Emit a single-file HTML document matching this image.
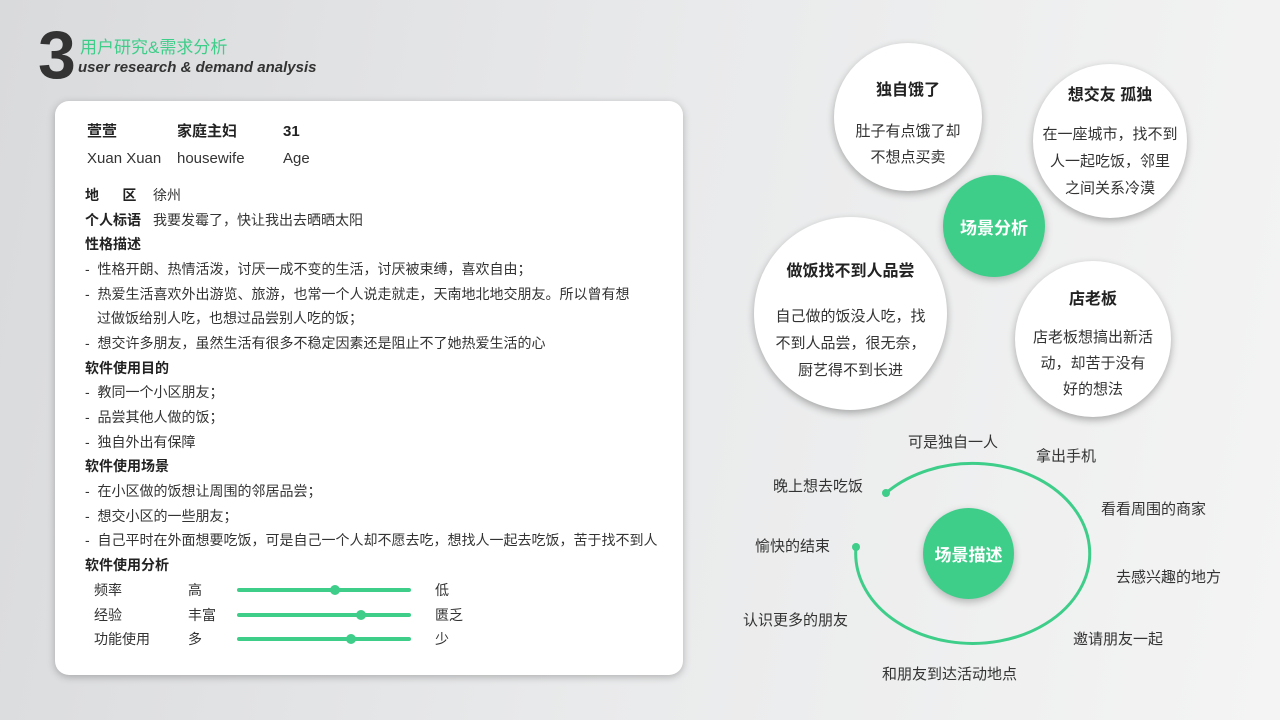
<!DOCTYPE html>
<html><head><meta charset="utf-8"><style>
*{margin:0;padding:0;box-sizing:border-box}
body{width:1280px;height:720px;overflow:hidden;position:relative;font-family:"Liberation Sans","Noto Sans CJK SC",sans-serif;background:linear-gradient(100deg,#d9dadc 0%,#e9eaeb 50%,#f4f4f4 100%);color:#333}
.abs{position:absolute}
.card{left:55px;top:101px;width:628px;height:574px;background:#fff;border-radius:14px;box-shadow:0 2px 8px rgba(0,0,0,.25)}
.t{position:absolute;font-size:14px;white-space:nowrap;color:#333;line-height:20px}
.b{font-weight:bold;color:#222}
.c{position:absolute;border-radius:50%;background:#fff;box-shadow:0 3px 8px rgba(0,0,0,.3);display:flex;flex-direction:column;align-items:center;justify-content:center;text-align:center}
.c h4{font-size:16px;font-weight:bold;color:#222;margin-bottom:16px}
.c p{font-size:15px;line-height:27px;color:#333}
.g{position:absolute;border-radius:50%;background:#3fcd8a;color:#fff;font-weight:bold;font-size:17px;display:flex;align-items:center;justify-content:center;box-shadow:0 3px 8px rgba(0,0,0,.25)}
.lbl{position:absolute;font-size:15px;color:#333;white-space:nowrap}
.bar{position:absolute;left:238px;width:174px;height:4px;border-radius:2px;background:#3fcd8a}
.dot{position:absolute;width:10px;height:10px;border-radius:50%;background:#3fcd8a;top:-3px}
</style></head><body>
<div class="abs" style="left:38px;top:24px;font-size:68px;font-weight:bold;color:#333;line-height:62px">3</div>
<div class="abs" style="left:80px;top:38px;font-size:17px;color:#3fcd8a;line-height:20px">用户研究&amp;需求分析</div>
<div class="abs" style="left:78px;top:58px;font-size:15px;font-weight:bold;font-style:italic;color:#333;line-height:20px">user research &amp; demand analysis</div>

<div class="abs card">
<div class="t b" style="left:32px;top:21px;font-size:15px">萱萱</div>
<div class="t b" style="left:122px;top:21px;font-size:15px">家庭主妇</div>
<div class="t b" style="left:228px;top:21px;font-size:15px">31</div>
<div class="t" style="left:32px;top:48px;font-size:15px">Xuan Xuan</div>
<div class="t" style="left:122px;top:48px;font-size:15px">housewife</div>
<div class="t" style="left:228px;top:48px;font-size:15px">Age</div>
<div class="t b" style="left:30px;top:84px">地&nbsp;&nbsp;&nbsp;&nbsp;&nbsp;&nbsp;区</div><div class="t" style="left:98px;top:84px">徐州</div>
<div class="t b" style="left:30px;top:109px">个人标语</div><div class="t" style="left:98px;top:109px">我要发霉了，快让我出去晒晒太阳</div>
<div class="t b" style="left:30px;top:133px">性格描述</div>
<div class="t" style="left:30px;top:158px">-&nbsp; 性格开朗、热情活泼，讨厌一成不变的生活，讨厌被束缚，喜欢自由；</div>
<div class="t" style="left:30px;top:183px">-&nbsp; 热爱生活喜欢外出游览、旅游，也常一个人说走就走，天南地北地交朋友。所以曾有想</div>
<div class="t" style="left:42px;top:207px">过做饭给别人吃，也想过品尝别人吃的饭；</div>
<div class="t" style="left:30px;top:232px">-&nbsp; 想交许多朋友，虽然生活有很多不稳定因素还是阻止不了她热爱生活的心</div>
<div class="t b" style="left:30px;top:257px">软件使用目的</div>
<div class="t" style="left:30px;top:281px">-&nbsp; 教同一个小区朋友；</div>
<div class="t" style="left:30px;top:306px">-&nbsp; 品尝其他人做的饭；</div>
<div class="t" style="left:30px;top:331px">-&nbsp; 独自外出有保障</div>
<div class="t b" style="left:30px;top:355px">软件使用场景</div>
<div class="t" style="left:30px;top:380px">-&nbsp; 在小区做的饭想让周围的邻居品尝；</div>
<div class="t" style="left:30px;top:405px">-&nbsp; 想交小区的一些朋友；</div>
<div class="t" style="left:30px;top:429px">-&nbsp; 自己平时在外面想要吃饭，可是自己一个人却不愿去吃，想找人一起去吃饭，苦于找不到人</div>
<div class="t b" style="left:30px;top:454px">软件使用分析</div>
<div class="t" style="left:39px;top:479px">频率</div><div class="t" style="left:133px;top:479px">高</div><div class="t" style="left:380px;top:479px">低</div>
<div class="bar" style="top:487px;left:182px"><div class="dot" style="left:93px"></div></div>
<div class="t" style="left:39px;top:504px">经验</div><div class="t" style="left:133px;top:504px">丰富</div><div class="t" style="left:380px;top:504px">匮乏</div>
<div class="bar" style="top:512px;left:182px"><div class="dot" style="left:119px"></div></div>
<div class="t" style="left:39px;top:528px">功能使用</div><div class="t" style="left:133px;top:528px">多</div><div class="t" style="left:380px;top:528px">少</div>
<div class="bar" style="top:536px;left:182px"><div class="dot" style="left:109px"></div></div>
</div>

<div class="c" style="left:834px;top:43px;width:148px;height:148px;padding-top:12px"><h4 style="margin-bottom:19px">独自饿了</h4><p style="line-height:26px">肚子有点饿了却<br>不想点买卖</p></div>
<div class="c" style="left:1033px;top:64px;width:154px;height:154px"><h4>想交友 孤独</h4><p>在一座城市，找不到<br>人一起吃饭，邻里<br>之间关系冷漠</p></div>
<div class="c" style="left:754px;top:217px;width:193px;height:193px;padding-top:14px"><h4 style="margin-bottom:22px">做饭找不到人品尝</h4><p>自己做的饭没人吃，找<br>不到人品尝，很无奈，<br>厨艺得不到长进</p></div>
<div class="c" style="left:1015px;top:261px;width:156px;height:156px;padding-top:10px"><h4>店老板</h4><p style="line-height:26px">店老板想搞出新活<br>动，却苦于没有<br>好的想法</p></div>
<div class="g" style="left:943px;top:175px;width:102px;height:102px">场景分析</div>

<svg class="abs" style="left:0;top:0" width="1280" height="720">
<path d="M886 493 A117 90 0 1 1 856 547" fill="none" stroke="#3fcd8a" stroke-width="3"/>
<circle cx="886" cy="493" r="4" fill="#3fcd8a"/><circle cx="856" cy="547" r="4" fill="#3fcd8a"/>
</svg>
<div class="g" style="left:923px;top:508px;width:91px;height:91px">场景描述</div>
<div class="lbl" style="left:908px;top:431px">可是独自一人</div>
<div class="lbl" style="left:1036px;top:445px">拿出手机</div>
<div class="lbl" style="left:773px;top:475px">晚上想去吃饭</div>
<div class="lbl" style="left:1101px;top:498px">看看周围的商家</div>
<div class="lbl" style="left:755px;top:535px">愉快的结束</div>
<div class="lbl" style="left:1116px;top:566px">去感兴趣的地方</div>
<div class="lbl" style="left:743px;top:609px">认识更多的朋友</div>
<div class="lbl" style="left:1073px;top:628px">邀请朋友一起</div>
<div class="lbl" style="left:882px;top:663px">和朋友到达活动地点</div>
</body></html>
